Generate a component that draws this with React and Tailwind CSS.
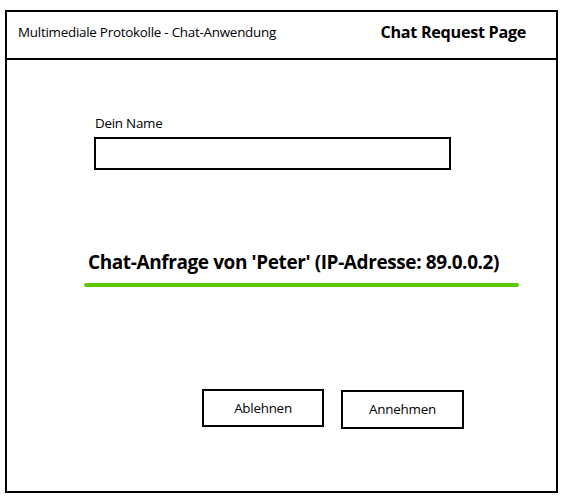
export default function App() {
  return (
    <div className="w-[565px] h-[498px] bg-white pt-[10px] pl-[5px]" style={{ fontFamily: "'Open Sans', 'Noto Sans', sans-serif" }}>
      <div className="w-[553px] h-[483px] border-2 border-black flex flex-col">
        <div className="h-[48px] border-b-2 border-black flex items-center justify-between pl-[11px] pr-[30px] pb-[6px]">
          <span className="text-[13.4px] text-black tracking-[-0.25px]">Multimediale Protokolle - Chat-Anwendung</span>
          <span className="text-[16.2px] font-bold text-black tracking-[-0.3px]">Chat Request Page</span>
        </div>
        <div className="flex flex-col pl-[87px]">
          <label className="mt-[54px] text-[13.4px] text-black tracking-[-0.25px] leading-[18px] pl-[1px]">Dein Name</label>
          <input type="text" className="mt-[5px] w-[357px] h-[33px] border-2 border-black outline-none" />
        </div>
        <div className="mt-[79px] pl-[77px]">
          <h1 className="text-[19px] font-bold text-black tracking-[-0.4px] leading-[26px] pl-[4px]">Chat-Anfrage von 'Peter' (IP-Adresse: 89.0.0.2)</h1>
          <div className="mt-[8px] w-[435px] h-[4px] rounded-full bg-[#5cc900]" />
        </div>
        <div className="mt-[102px] flex pl-[195px] gap-[17px]">
          <button className="w-[122px] h-[38px] border-2 border-black text-[13.4px] text-black tracking-[-0.25px]">Ablehnen</button>
          <button className="mt-[1px] w-[123px] h-[39px] border-2 border-black text-[13.4px] text-black tracking-[-0.25px]">Annehmen</button>
        </div>
      </div>
    </div>
  );
}
